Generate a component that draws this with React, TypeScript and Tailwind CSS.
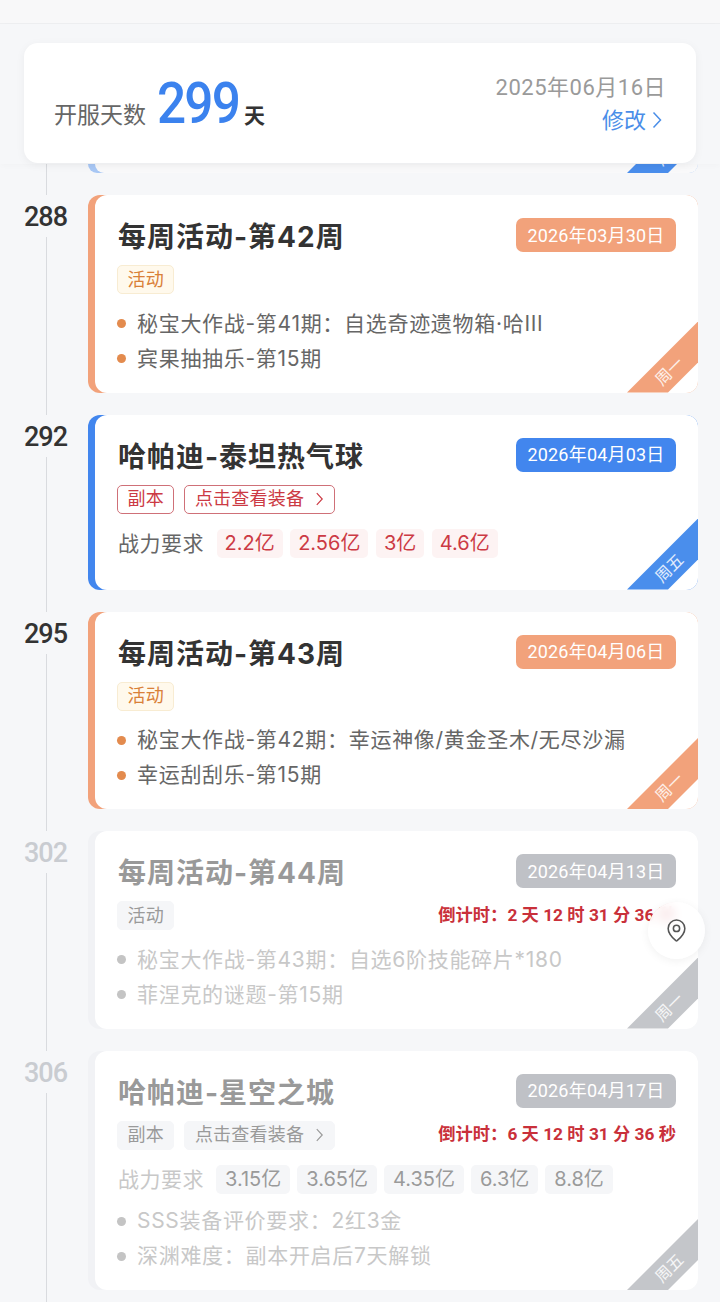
import React from "react";
import { MapPin } from "lucide-react";

type Ev = {
  day: number;
  title: string;
  date: string;
  accent: string;
  badge: string;
  ribbon: string;
  weekday: string;
  past: boolean;
  kind: string;
  equip?: boolean;
  countdown?: string;
  power?: string[];
  bullets?: string[];
};

const events: Ev[] = [
  { day: 288, title: "每周活动-第42周", date: "2026年03月30日", accent: "bg-[#f2a27b]", badge: "bg-[#f2a27b]", ribbon: "bg-[#f2a27b]", weekday: "周一", past: true, kind: "活动", bullets: ["秘宝大作战-第41期：自选奇迹遗物箱·哈III", "宾果抽抽乐-第15期"] },
  { day: 292, title: "哈帕迪-泰坦热气球", date: "2026年04月03日", accent: "bg-[#4286ee]", badge: "bg-[#4286ee]", ribbon: "bg-[#4a8eec]", weekday: "周五", past: true, kind: "副本", equip: true, power: ["2.2亿", "2.56亿", "3亿", "4.6亿"] },
  { day: 295, title: "每周活动-第43周", date: "2026年04月06日", accent: "bg-[#f2a27b]", badge: "bg-[#f2a27b]", ribbon: "bg-[#f2a27b]", weekday: "周一", past: true, kind: "活动", bullets: ["秘宝大作战-第42期：幸运神像/黄金圣木/无尽沙漏", "幸运刮刮乐-第15期"] },
  { day: 302, title: "每周活动-第44周", date: "2026年04月13日", accent: "bg-[#f1f2f5]", badge: "bg-[#bfc1c6]", ribbon: "bg-[#c4c6ca]", weekday: "周一", past: false, kind: "活动", countdown: "倒计时：2 天 12 时 31 分 36 秒", bullets: ["秘宝大作战-第43期：自选6阶技能碎片*180", "菲涅克的谜题-第15期"] },
  { day: 306, title: "哈帕迪-星空之城", date: "2026年04月17日", accent: "bg-[#f1f2f5]", badge: "bg-[#bfc1c6]", ribbon: "bg-[#c4c6ca]", weekday: "周五", past: false, kind: "副本", equip: true, countdown: "倒计时：6 天 12 时 31 分 36 秒", power: ["3.15亿", "3.65亿", "4.35亿", "6.3亿", "8.8亿"], bullets: ["SSS装备评价要求：2红3金", "深渊难度：副本开启后7天解锁"] },
];

function Chevron({ className }: { className: string }) {
  return (
    <svg viewBox="0 0 10 18" fill="none" stroke="currentColor" strokeWidth="1.5" className={className}>
      <path d="M1.5 1.5 L8.5 9 L1.5 16.5" />
    </svg>
  );
}

function Ribbon({ color, weekday }: { color: string; weekday: string }) {
  return (
    <div className={`absolute right-0 bottom-0 w-[71px] h-[71px] [clip-path:polygon(100%_0,100%_41px,41px_100%,0_100%)] ${color}`}>
      <span className="absolute left-[42px] top-[49px] -translate-x-1/2 -translate-y-1/2 -rotate-45 text-[16px] leading-none whitespace-nowrap text-white/85">
        {weekday}
      </span>
    </div>
  );
}

function Tag({ ev, children }: { ev: Ev; children: React.ReactNode }) {
  const look = !ev.past
    ? "bg-[#f5f6f8] text-[#9a9a9a] border-[#f5f6f8]"
    : ev.kind === "活动"
      ? "bg-[#fff9ec] text-[#d98038] border-[#f8ecd2]"
      : "bg-white text-[#cc3a44] border-[#cf7078]";
  return (
    <span className={`h-[29px] px-[9.5px] rounded-[5px] border flex items-center gap-[11px] text-[18px] leading-none tracking-[0.2px] ${look}`}>
      {children}
    </span>
  );
}

function Card({ ev }: { ev: Ev }) {
  return (
    <div className={`relative flex-1 rounded-[12px] overflow-hidden pl-[7px] ${ev.accent}`}>
      <div className={`bg-white rounded-l-[12px] pt-[23px] pr-[22px] pl-[23px] ${ev.bullets ? "pb-[16.5px]" : "pb-[32px]"}`}>
        <div className="h-[34px] flex items-center justify-between">
          <h3 className={`pt-[4px] text-[28px] leading-none font-bold tracking-[1px] ${ev.past ? "text-[#333333]" : "text-[#999999]"}`}>{ev.title}</h3>
          <span className={`w-[160px] h-[34px] rounded-[7px] flex items-center justify-center text-white text-[18px] tracking-[0.2px] font-['Roboto','Noto_Sans_CJK_SC',sans-serif] ${ev.badge}`}>
            {ev.date}
          </span>
        </div>
        <div className="mt-[13px] flex items-center gap-[10px] -ml-[1px]">
          <Tag ev={ev}>{ev.kind}</Tag>
          {ev.equip && (
            <Tag ev={ev}>
              点击查看装备
              <Chevron className="w-[9px] h-[14px]" />
            </Tag>
          )}
          {ev.countdown && (
            <span className="ml-auto text-[17.3px] font-bold text-[#c9303a] whitespace-nowrap font-['Roboto','Noto_Sans_CJK_SC',sans-serif]">
              {ev.countdown}
            </span>
          )}
        </div>
        {ev.power && (
          <div className={`mt-[15px] flex items-center text-[21px] ${ev.past ? "gap-[7.5px] text-[#666666]" : "gap-[7px] text-[#c8c8c8]"}`}>
            <span className="mr-[5px] tracking-[0.5px] leading-none">战力要求</span>
            {ev.power.map((p) => (
              <span key={p} className={`h-[29px] rounded-[5px] flex items-center text-[20px] leading-none ${ev.past ? "px-[8px] bg-[#fdf3f3] text-[#cc3a44]" : "px-[9px] bg-[#f5f6f8] text-[#9a9a9a]"}`}>
                {p}
              </span>
            ))}
          </div>
        )}
        {ev.bullets && (
          <ul className={ev.power ? "mt-[10px]" : "mt-[12px]"}>
            {ev.bullets.map((b) => (
              <li key={b} className={`h-[35px] flex items-center gap-[11px] text-[21px] tracking-[0.7px] whitespace-nowrap ${ev.past ? "text-[#666666]" : "text-[#c8c8c8]"}`}>
                <span className={`w-[9px] h-[9px] rounded-full -ml-[1px] ${ev.past ? "bg-[#e38b4e]" : "bg-[#c4c4c4]"}`} />
                {b}
              </li>
            ))}
          </ul>
        )}
      </div>
      <Ribbon color={ev.ribbon} weekday={ev.weekday} />
    </div>
  );
}

export default function App() {
  return (
    <div className="relative w-[720px] h-[1302px] overflow-hidden bg-[#f6f7f9] font-['Inter','Noto_Sans_CJK_SC',sans-serif]">
      <div className="h-[24px] bg-[#f8f8f9] border-b border-[#eeeff1]" />

      <div className="relative z-10 h-[140px] px-[24px] pt-[19px] bg-[#f6f7f9] shadow-[0_2px_6px_rgba(0,0,0,0.02)]">
        <div className="h-[120px] rounded-[14px] bg-white shadow-[0_2px_10px_rgba(0,0,0,0.05)] pl-[30px] pr-[30px] flex items-center justify-between">
          <div className="flex items-baseline mt-[2px]">
            <span className="text-[23px] text-[#666666]">开服天数</span>
            <span className="ml-[11px] w-[75px] inline-block origin-left scale-x-[0.9] text-[57px] leading-[70px] font-medium text-[#3b82ee] tracking-[-2px] font-['Roboto',sans-serif]">299</span>
            <span className="ml-[12px] text-[21px] font-bold text-[#333333]">天</span>
          </div>
          <div className="flex flex-col items-end">
            <span className="mt-[1px] text-[22px] leading-[32px] tracking-[0.5px] text-[#9a9a9a] font-['Roboto','Noto_Sans_CJK_SC',sans-serif]">2025年06月16日</span>
            <span className="flex items-center gap-[6px] mr-[4px] text-[22px] leading-[32px] text-[#4a8ee8]">
              修改
              <Chevron className="w-[10px] h-[18px]" />
            </span>
          </div>
        </div>
      </div>

      <div className="flex h-[31px] pb-[22px]">
        <div className="w-[88px] shrink-0">
          <div className="ml-[46px] w-px h-[31px] bg-[#d9dbdf]" />
        </div>
        <div className="relative flex-1 mr-[22px] rounded-b-[12px] overflow-hidden pl-[7px] bg-[#a9c8f5]">
          <div className="h-full bg-[#f9f9fa] rounded-bl-[12px]" />
          <Ribbon color="bg-[#4a8eec]" weekday="周五" />
        </div>
      </div>

      {events.map((ev) => (
        <div key={ev.day} className="flex pr-[22px] pb-[22px]">
          <div className="w-[88px] shrink-0 flex flex-col">
            <div className={`pl-[3px] h-[42px] text-center text-[27px] leading-[44px] tracking-[-1px] font-medium font-['Roboto',sans-serif] ${ev.past ? "text-[#333333]" : "text-[#c9ccd1]"}`}>
              {ev.day}
            </div>
            <div className="ml-[46px] w-px flex-1 -mb-[22px] bg-[#d9dbdf]" />
          </div>
          <Card ev={ev} />
        </div>
      ))}

      <div className="absolute left-[648px] top-[902px] z-20 w-[57px] h-[57px] rounded-full bg-white/85 backdrop-blur-[5px] shadow-[0_2px_10px_rgba(0,0,0,0.06)] flex items-center justify-center">
        <MapPin size={25} strokeWidth={1.5} className="text-[#555555]" />
      </div>
    </div>
  );
}
